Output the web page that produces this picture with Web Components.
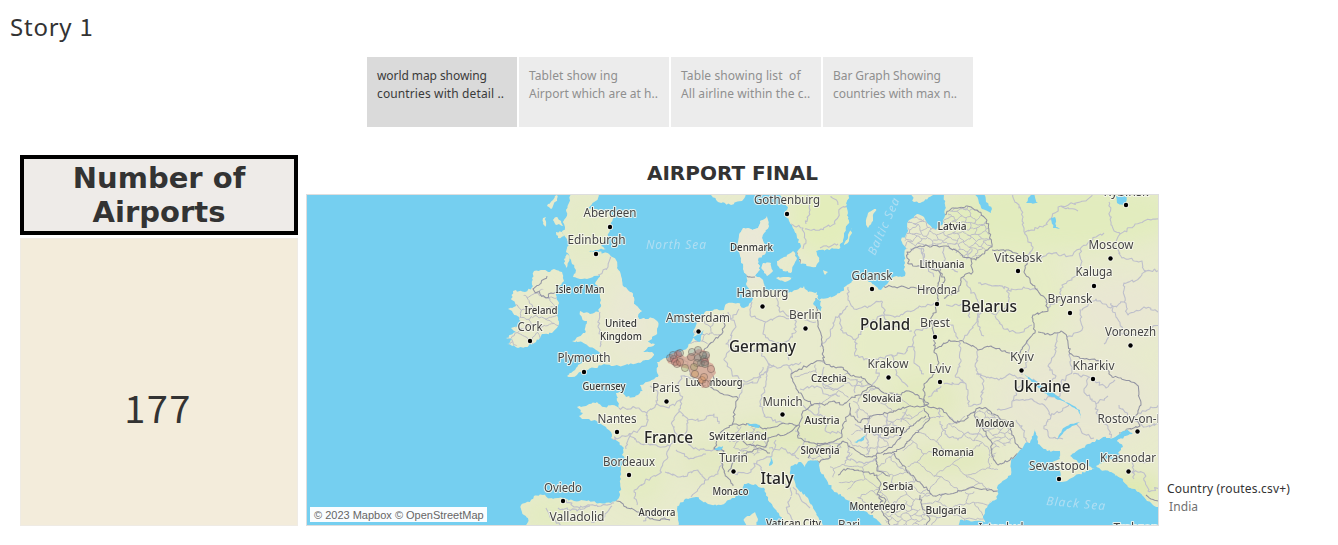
<!DOCTYPE html>
<html lang="en">
<head>
<meta charset="utf-8">
<title>Story 1</title>
<style>html,body{margin:0;background:#fff;overflow:hidden}</style>
</head>
<body>
<story-app>
  <story-title slot="title">Story <span style="font-family:'Noto Sans CJK SC',sans-serif">1</span></story-title>
  <story-point slot="points" active><span>world map showing</span><span slot="second">countries with detail ..</span></story-point>
  <story-point slot="points"><span>Tablet show ing</span><span slot="second">Airport which are at h..</span></story-point>
  <story-point slot="points"><span>Table showing list&nbsp; of</span><span slot="second">All airline within the c..</span></story-point>
  <story-point slot="points"><span>Bar Graph Showing</span><span slot="second">countries with max n..</span></story-point>
  <airport-count slot="body" value="177">Number of<br>Airports</airport-count>
  <airport-map slot="body">AIRPORT FINAL</airport-map>
  <map-legend slot="body" item="India">Country (routes.csv+)</map-legend>
</story-app>
<script>
const define = (name, html, setup) => customElements.define(name, class extends HTMLElement {
  constructor() {
    super();
    const t = document.createElement('template');
    t.innerHTML = html;
    this.attachShadow({mode: 'open'}).append(t.content.cloneNode(true));
  }
  connectedCallback() { if (setup) setup(this, this.shadowRoot); }
});

define('story-app', `<style>
:host{display:block;width:1338px;height:545px;font-family:"Noto Sans",sans-serif;color:#333}
.points{display:flex;gap:2px;margin-left:367px}
.body{display:flex;margin:28px 0 0 20px;height:371px}
</style><slot name="title"></slot><div class="points"><slot name="points"></slot></div><div class="body"><slot name="body"></slot></div>`);

define('story-title', `<style>:host{display:block;height:57px;padding-left:10px;box-sizing:border-box;font-size:24px;line-height:51px;white-space:nowrap}div{width:max-content}</style><div><slot></slot></div>`, (el, root) => {
  const d = root.querySelector('div');
  d.style.letterSpacing = ((83.5 - d.getBoundingClientRect().width) / 7) + 'px';
});

define('story-point', `<style>
:host{display:block;box-sizing:border-box;width:150px;height:70px;padding:10px 0 0 10px;background:#ececec;color:#8f8f8f;font-size:12px;line-height:18px;white-space:nowrap}
:host([active]){background:#dadada;color:#3a3a3a}
div{height:18px;width:max-content}
</style><div><slot></slot></div><div><slot name="second"></slot></div>`, (el, root) => {
  const widths = [[110,127],[89,129],[119,129],[108,124]];
  const i = [...el.parentNode.querySelectorAll('story-point')].indexOf(el);
  [...root.querySelectorAll('div')].forEach((d, j) => {
    const n = j ? 23 : 16;
    d.style.letterSpacing = ((widths[i][j] - d.getBoundingClientRect().width) / n) + 'px';
  });
});

define('airport-count', `<style>
:host{display:flex;flex-direction:column;gap:3px;width:278px;height:371px}
h2{box-sizing:border-box;margin:0;height:80px;border:4px solid #000;background:#eeebe8;text-align:center;font:700 29px/34px "DejaVu Sans",sans-serif;padding-top:2px}
.n{flex:1;box-sizing:border-box;border:1px solid #efebe4;background:#f3ecdb;text-align:center;font:400 38px/53px "Noto Sans CJK SC",sans-serif;padding:141px 2px 0 0;letter-spacing:1.4px}
</style><h2><slot></slot></h2><div class="n"></div>`, (el, root) => root.querySelector('.n').textContent = el.getAttribute('value'));

define('map-legend', `<style>
:host{display:block;padding:325px 0 0 8px;font-size:12px;line-height:18px;white-space:nowrap}
.t{width:max-content;font-weight:450}.i{padding-left:2px;color:#707070;letter-spacing:.1px}
</style><div class="t"><slot></slot></div><div class="i"></div>`, (el, root) => {
  root.querySelector('.i').textContent = el.getAttribute('item');
  const t = root.querySelector('.t');
  t.style.letterSpacing = ((123 - t.getBoundingClientRect().width) / 21) + 'px';
});

/* Map geometry, in the coordinate space of the 852 x 330 viewport that starts at (307,195). */
const LAND = {
  britain: '571,194 569,203 566,210 567,216 563,222 565,227 562,233 567,239 569,245 566,252 570,256 572,264 576,270 573,277 580,279 587,279 594,276 600,275 595,284 601,287 598,292 601,300 599,312 590,314 580,311 582,318 587,321 585,333 578,337 572,341 582,342 588,346 596,350 601,353 591,357 585,361 578,365 575,370 567,376 572,377 580,372 588,370 595,368 604,364 613,366 625,365 640,363 648,360 654,355 652,352 643,352 648,347 655,344 646,342 656,335 658,322 652,318 641,319 638,317 642,311 634,304 633,294 624,287 622,279 617,268 616,260 609,254 598,252 589,252 598,250 606,249 601,246 608,236 611,226 614,217 609,212 598,210 588,208 594,202 598,198 599,194',
  ireland: '532,278 534,271 543,270 550,272 554,269 562,272 564,281 557,288 556,295 559,303 557,315 559,324 552,333 542,334 536,342 525,347 518,348 507,344 513,339 506,338 516,332 511,328 520,325 519,317 508,309 516,306 511,299 513,291 525,292 533,286',
  lewis:'548,204 553,200 557,195 557,199 553,206 551,209 547,206', uist:'543,218 546,217 545,227 543,224', skye:'553,220 557,217 561,221 563,226 559,224 556,225', mull:'556,232 562,232 564,236 558,238', arran:'564,259 567,254 570,257 566,268',
  europe: '527,527 528,518 522,512 521,505 530,502 534,496 543,495 553,499 563,498 574,501 587,501 600,503 611,503 617,500 620,494 621,479 622,465 626,460 622,455 624,448 616,440 611,438 611,432 606,427 598,422 590,420 582,419 579,416 583,413 577,407 586,406 597,402 604,407 612,405 619,408 616,393 622,392 626,397 635,397 643,391 640,385 647,382 658,377 657,362 667,358 679,353 688,347 693,338 695,328 699,319 706,311 717,309 724,310 726,304 738,303 744,308 752,301 752,293 746,284 747,276 743,269 741,258 738,249 739,235 743,228 749,232 758,228 760,221 767,216 769,226 764,233 762,238 766,252 758,260 760,270 755,276 763,280 766,291 777,291 788,293 796,290 804,286 808,292 817,292 819,300 828,298 840,293 846,286 856,279 865,280 871,282 881,290 888,283 893,277 905,276 904,260 906,249 901,240 907,233 908,222 917,214 924,217 928,224 936,230 943,224 946,208 944,194 1161,194 1161,512 1158,507 1147,501 1139,492 1128,487 1121,478 1110,472 1101,470 1096,466 1103,462 1109,458 1122,461 1118,453 1123,447 1117,441 1133,433 1127,429 1113,438 1103,437 1092,442 1080,449 1070,456 1079,463 1091,467 1095,469 1079,474 1067,481 1060,482 1060,471 1050,463 1060,459 1060,451 1047,451 1038,444 1027,442 1020,450 1011,462 1011,475 998,485 997,499 990,503 985,510 983,518 989,527 883,527 873,515 858,509 844,497 833,490 826,479 820,470 818,461 808,461 805,467 801,462 791,466 790,472 797,488 808,498 815,511 824,526 787,527 777,512 768,500 765,489 755,484 744,484 738,495 721,505 708,504 696,497 684,500 677,509 678,527',
  sweden:'780,194 788,207 785,214 792,225 797,238 801,246 797,252 801,264 816,267 819,259 816,251 827,249 839,249 844,235 849,221 846,207 849,194', norway:'710,194 718,202 731,205 742,201 748,194',
  zealand:'777,261 784,257 793,251 797,258 793,266 791,273 783,271 779,267', lolland:'776,278 786,277 794,277 785,282', funen:'763,263 771,263 773,271 767,276 762,269', limfjord:'741,231 748,228 754,231 749,238 742,239', bornholm:'823,270 828,272 825,275', gotland:'866,223 869,212 876,209 873,218 868,228', oland:'844,245 848,235 852,228 849,241', saaremaa:'911,194 914,202 922,202 933,195', corsica:'744,519 755,512 758,519 756,527 746,527'
};
const WATER = ['975,194 984,194 986,202 992,209 991,213 982,209','1028,198 1033,194 1038,203 1026,203','1116,196 1128,196 1125,206 1117,203','1051,218 1055,217 1056,227 1060,229 1053,228','1024,374 1034,380 1045,388 1060,398 1072,405 1080,410 1081,419 1078,410 1060,400 1044,393','1080,422 1067,429 1057,440 1062,430 1070,424','854,442 866,435 864,440 857,443','715,448 723,446 721,450 715,450','747,423 760,425 759,428 749,426','816,298 821,301 821,311 813,304','691,338 698,334 704,330 700,342','1035,429 1038,441 1037,448 1030,445','771,456 773,463 769,466','960,520 990,522 993,527 957,527'];
const NATIONAL = [
 '559,291 551,293 546,298 540,294 533,289 540,284 547,276','615,500 626,507 638,512 650,519 670,520',
 '677,354 688,362 691,376 702,380 711,387 720,393 738,398 735,409 732,425 721,432 714,449 724,451 721,462 725,474 733,486',
 '725,316 723,332 713,342 704,350 707,364 714,379 711,388','755,277 748,277 743,273','795,250 800,263 796,267',
 '816,298 818,323 822,342 824,361 815,362 791,374 796,387 803,397 813,405 803,411 799,425 783,423 770,428 766,429 755,426 743,424 732,425','824,361 832,367 841,367 852,376 865,379 872,386 884,393 899,395 909,391 922,399 929,404',
 '813,405 826,404 834,401 843,405 850,399 860,395 872,386','850,403 851,416 858,422 872,416 890,412 907,407 920,407 929,404','843,441 850,447 867,457 881,453 895,444 903,433 914,424 926,416','799,425 798,438 812,443 827,444 842,437 843,424 850,413','808,458 811,448 827,444','843,441 833,452 828,459 814,463','838,475 844,469 862,471 877,475 881,484 877,494 883,501 871,513','876,455 877,471 890,476','892,452 901,463 911,475 920,482 933,496 950,494 973,487 998,491','920,495 922,507 930,519 925,527',
 '728,472 735,460 747,452 760,448 770,453','735,434 747,445 765,447 768,438 788,433 799,425',
 '883,286 940,290 945,280 938,270 925,268 909,264 907,252 920,246 944,246 957,251 963,257 976,260 985,251 992,247 989,231 986,219 977,210 966,206 952,208 944,215','971,259 973,272 961,278 959,291 944,298','941,267 938,291 936,310 931,319 935,338 934,351 949,340 963,341 978,350 991,346 1009,353 1020,353 1028,340 1035,333 1033,315 1048,311 1045,298 1035,288 1024,272 1027,260 1011,251 992,250','1038,332 1050,335 1061,331 1067,337 1070,354 1085,359 1100,361 1112,377 1121,378 1137,385 1141,405 1135,416 1140,426 1119,433','934,351 939,363 932,377 924,384 924,405 943,410 954,422 964,421 976,409 986,408 996,415 1009,424 1015,442 1022,451 1010,460 998,465 993,457 991,441 980,424 973,412','883,455 902,448 912,437 923,427 930,418 924,408','1146,495 1151,499 1160,501','879,495 886,500 881,510 890,525'
];
const REGIONS = [
 '598,275 608,267 610,257','600,312 598,326 602,337 600,347','566,500 574,507 590,505 601,506 614,503','558,508 577,511 590,506','612,506 603,518 591,522','546,508 550,517 562,526','643,521 654,511 670,520','619,408 637,408 647,413 647,423 638,431 624,436 612,439','647,413 657,404 669,408 682,399 678,387 681,376 696,380','657,404 658,393 650,386','682,399 679,411 688,420 704,420 714,414 719,424','680,411 672,422 677,436 670,446 662,447 641,444 630,434 626,449','670,446 667,459 659,474 645,481 634,492 637,505','665,472 680,477 698,470 706,480 699,488 691,497','694,449 713,450 723,451','687,420 685,437 694,449','676,450 689,459 706,454','706,480 718,474 724,462',
 '728,312 736,327 726,344 743,352 758,348 768,363 776,367 789,366 801,362','731,345 724,359 732,374 745,382 760,376 774,365','752,302 750,315 766,322 780,316 795,320 795,333 785,342 789,360','766,322 763,334 774,342 785,342','739,398 743,384 758,381 763,367','797,311 805,320 816,322','777,291 779,310 792,318','722,317 733,318 739,309','768,363 766,384 760,402 764,416 783,424','789,366 793,374',
 '848,287 848,300 854,309 869,306 881,301 885,315 897,316 918,308 934,303','848,306 839,316 843,333 856,339 868,325 882,315','820,347 829,338 835,320 843,312','856,339 855,356 873,361 890,355 903,354 913,344 915,331 931,326','882,315 889,328 901,325 912,331','873,361 879,376 872,386','893,355 896,375 908,387','913,344 914,363 924,374',
 '791,224 803,228 806,240 803,249','805,229 821,229 835,224 841,208 849,205','807,195 810,210 806,224','820,248 838,244','838,205 831,196','910,249 922,248 926,265 934,277','923,248 923,266 939,269','944,247 944,265 958,272','966,259 972,249','1011,194 1021,210 1025,233 1033,248 1025,260','1025,232 1043,227 1052,217 1061,206 1085,201 1094,194','1061,206 1078,211','1109,202 1111,225 1120,234 1113,243','1120,234 1135,224 1153,219 1160,220','1104,233 1096,237 1080,249 1069,256 1049,253 1037,260 1025,260','1080,249 1081,267 1072,280 1062,285 1060,300 1048,308','1113,243 1122,258 1142,261 1145,272 1160,270','1145,270 1137,280 1124,283 1124,302 1111,308 1096,299 1080,310 1082,330 1067,337','1124,302 1128,315 1144,307 1160,312','1104,344 1114,330 1130,335 1145,333 1160,323','963,278 970,288 979,303 978,326 984,336','978,283 1008,288 1008,305 996,315 982,308','982,309 975,324 963,340','1008,290 1025,288 1038,289','995,316 1004,329 1019,333 1032,325','946,305 966,305 970,318','935,319 953,325 958,339','959,342 961,360 955,376','978,350 976,370 984,381 980,404 968,406','955,376 966,384 969,405','976,374 999,380 1010,374 1024,379 1017,390 1012,407 997,410','1028,341 1028,360 1022,375','1058,333 1055,354 1048,366 1056,376 1044,389 1033,379','1070,354 1072,372 1061,382 1060,396 1044,399','1013,401 1032,399 1044,405 1051,416 1069,405','1051,416 1044,426 1050,438 1063,439','1073,374 1089,377 1106,388 1115,380','1089,377 1084,392 1096,404 1108,396','1096,404 1098,417 1107,425 1111,438','1076,423 1082,433 1094,438','1111,303 1117,318 1125,330','1016,420 1023,430 1027,442','1139,413 1160,405','1119,405 1130,418 1144,427 1160,424','1129,471 1144,473 1148,491 1160,487','1134,479 1133,462 1146,462','939,408 939,418','941,386 928,397','964,383 944,384','839,377 852,386 870,385','800,389 817,386 825,394 840,396','824,367 823,384 835,389 844,385','857,379 855,393','850,445 847,459 864,464 877,458','887,413 887,426 878,438 878,454','868,416 869,431 883,438 902,436','855,424 867,432 868,455','803,405 815,415 825,416 827,432 842,433','800,436 795,431','820,402 817,415','735,474 751,472 757,461 772,456 776,440','757,461 764,474 775,479 789,486 791,496','769,448 785,449 799,459','792,455 803,445 805,438','791,497 787,510 795,524','793,487 800,497 810,508','883,414 893,425 905,431','858,409 858,418','907,409 901,422','940,421 945,434 958,440 968,432 988,437'
];
const DENSE = [
 ['ireland','533,287 559,292 560,333 536,345 508,346 508,309',10,3],['latvia','908,222 918,214 936,230 946,217 952,208 966,206 977,210 986,219 992,247 976,260 963,257 944,246 920,246 903,250',5.5,2.2],
 ['moldova','973,412 986,408 1009,424 1015,442 998,448 991,465 991,441 980,424',5,1.5],['slovenia','808,458 811,448 842,438 843,446 828,459 814,463',5,1.5],['swiss','728,440 735,426 766,429 770,445 755,456 735,450',7,3],
 ['balkan','830,452 876,455 879,494 872,510 830,475',15,5],['serbia','876,455 892,452 932,495 921,510 880,510',12,4],['macedonia','880,507 905,500 927,513 925,525 887,525',5,1],['romania','902,448 928,416 975,416 990,440 998,465 997,490 970,490 933,496 910,474',17,6],['bulgaria','920,495 998,490 985,510 989,525 925,525',14,5],['hungary','844,441 872,416 924,410 900,440 868,456',18,6],['czech','792,374 824,361 869,382 840,404 812,404',18,6],['netherlands','695,325 724,313 720,338 700,348 690,344',10,3],['slovakia','852,402 873,386 923,400 890,412 857,420',15,5]
];
const AIRPORTS_AREA = '667,359 671,354 678,351 685,357 691,354 698,349 704,350 710,355 709,362 713,364 716,373 711,379 709,387 702,388 698,379 691,376 689,369 680,367 674,365 668,363';
const MARKS = [['670,358','7b8790'],['674,359','d45c65'],['678,354','d45c65'],['680,353','718896'],['675,362','bb7a76'],['677,364','b27c70'],['680,362','bd7a69'],['673,355','7c9098'],['692,352','789297'],['698,350','7b8790'],['691,357','a4847b'],['698,358','6a8991'],['704,359','687d73'],['701,363','648c91'],['706,355','789297'],['697,363','96917d'],['685,368','95a05f'],['694,367','95a05f'],['695,374','ca9a55'],['705,362','cf6671'],['711,369','d0a18f'],['705,364','618e7f'],['703,355','6e8d83'],['702,380','dc843f'],['706,384','d0a18f'],['704,377','cf9a70']];
/* name, centre x, baseline y, width, kind: c city, s small country, b big country */
const LABELS = [
 ['Aberdeen',610,217,53,'c'],['Edinburgh',596.5,244,58,'c'],['Isle of Man',580,293,49,'s'],['Ireland',541,314,33,'s'],['Cork',530,331,25,'c'],['United',621,327,32,'s'],['Kingdom',621,340,42,'s'],['Plymouth',584,362,53,'c'],['Guernsey',604,390,43,'s'],['Paris',666,392,28,'c'],['Nantes',617,423,39,'c'],['France',668.5,443,49,'b'],['Bordeaux',629,466,52,'c'],['Oviedo',563,492,38,'c'],['Valladolid',577,521,55,'c'],['Andorra',657,516,37,'s'],
 ['Gothenburg',787,204,66,'c'],['Denmark',751.5,251,43,'s'],['Hamburg',762.5,297,52,'c'],['Gdansk',872,280,41,'c'],['Amsterdam',698,322,64,'c'],['Berlin',805.5,319,33,'c'],['Germany',762.5,352,67,'b'],['Poland',885,330,50,'b'],['Luxembourg',714,386,57,'s'],['Munich',782.5,406,40,'c'],['Czechia',829,382,36,'s'],['Krakow',888,368,41,'c'],['Slovakia',882,402,39,'s'],['Austria',822,424,35,'s'],['Hungary',884,433,41,'s'],['Switzerland',738,440,58,'s'],['Slovenia',820,454,39,'s'],['Turin',733.5,462,29,'c'],['Italy',777,484,33,'b'],['Monaco',730.5,495,36,'s'],['Serbia',898,490,31,'s'],['Montenegro',877.5,510,56,'s'],['Vatican City',793.5,527,55,'s'],['Bari',849,529,22,'c'],
 ['Latvia',952,230,29,'s'],['Lithuania',942,268,45,'s'],['Hrodna',937,294,40,'c'],['Brest',935,327,30,'c'],['Belarus',989,312,56,'b'],['Vitsebsk',1018,262,48,'c'],['Moscow',1111,249,45,'c'],['Kaluga',1094,276,37,'c'],['Bryansk',1070,303,45,'c'],['Voronezh',1130.5,336,51,'c'],['Rybinsk',1126,196,45,'c'],['Kyiv',1022,361,24,'c'],['Lviv',940,373,22,'c'],['Ukraine',1042,392,57,'b'],['Kharkiv',1093.5,370,42,'c'],['Rostov-on-Don',1138.5,423,82,'c'],['Moldova',995,427,39,'s'],['Romania',953,456,42,'s'],['Sevastopol',1059,470,60,'c'],['Krasnodar',1128,462,56,'c'],['Bulgaria',946,514,41,'s'],['Istanbul',1001,532,45,'c'],['Trabzon',1136,532,45,'c']
];
const DOTS = [[610,227],[596,254],[530,341],[584,372],[666.5,401.5],[617,432],[629,475],[563,501],[787,214],[762.5,306.5],[872,289],[698.5,331.5],[805.5,328.5],[782.5,414.5],[888.5,377.5],[733.5,471.5],[937,304],[935,337],[1018,271],[1110.5,258.5],[1094,286],[1070,313],[1130.5,345.5],[1126,205],[1021.5,370.5],[940,382],[1093,379],[1137.5,431.5],[1059,479],[1128.5,471.5]];

let seed = 7;
const rnd = () => (seed = (seed * 16807) % 2147483647) / 2147483647 - .5;
const pts = s => s.split(' ').map(p => p.split(',').map(Number));
function rough(list, amount, closed) {
  const p = closed ? [...list, list[0]] : list, out = [p[0]];
  for (let i = 1; i < p.length; i++) {
    const [ax, ay] = p[i-1], [bx, by] = p[i], d = Math.hypot(bx-ax, by-ay), n = Math.max(1, Math.round(d / 2.2));
    for (let k = 1; k < n; k++) out.push([ax+(bx-ax)*k/n + rnd()*amount, ay+(by-ay)*k/n + rnd()*amount]);
    out.push(p[i]);
  }
  return 'M' + out.map(q => q.map(v => v.toFixed(1)).join(' ')).join('L') + (closed ? 'Z' : '');
}
function mesh([id, area, cell, jitter]) {
  const p = pts(area), xs = p.map(q => q[0]), ys = p.map(q => q[1]);
  const x0 = Math.min(...xs) - cell, y0 = Math.min(...ys) - cell, cols = Math.ceil((Math.max(...xs)-x0)/cell)+2, rows = Math.ceil((Math.max(...ys)-y0)/cell)+2;
  const g = Array.from({length: rows}, (_, r) => Array.from({length: cols}, (_, c) => [x0+c*cell+(r%2?cell/2:0)+rnd()*jitter*2, y0+r*cell+((c+r)%2?cell/4:-cell/4)+rnd()*jitter*2]));
  let d = '';
  for (let r = 0; r < rows; r++) for (let c = 0; c < cols; c++) {
    if (c+1 < cols) d += rough([g[r][c], g[r][c+1]], 2.2);
    if (r+1 < rows && (c+r) % 2) d += rough([g[r][c], g[r+1][c]], 2.2);
  }
  return `<clipPath id="${id}"><polygon points="${area}"/></clipPath><path clip-path="url(#${id})" d="${d}" stroke="#bcbcc6" stroke-width="1"/>`;
}
function drawMap() {
  const land = Object.values(LAND).map(s => rough(pts(s), 2.2, true)).join('');
  const tone = (x, y, rx, ry, c, o) => `<ellipse cx="${x}" cy="${y}" rx="${rx}" ry="${ry}" fill="${c}" opacity="${o}"/>`;
  const style = {c: 'font-size="12.2" fill="#454545"', s: 'font-size="10.4" font-weight="500" fill="#383838"', b: 'font-size="15.6" font-weight="500" fill="#252525"'};
  return `<svg width="852" height="330" viewBox="307 195 852 330" xmlns="http://www.w3.org/2000/svg">
  <defs><clipPath id="land"><path d="${land}"/></clipPath><filter id="soft" x="-50%" y="-50%" width="200%" height="200%"><feGaussianBlur stdDeviation="10"/></filter></defs>
  <rect x="307" y="195" width="852" height="330" fill="#75cff0"/>
  <path d="${land}" fill="#e8ebcd"/>
  <g clip-path="url(#land)"><g filter="url(#soft)">
  ${tone(1060,215,120,35,'#e2ecbd',.95)}${tone(1000,290,65,55,'#e4ecc2',.75)}${tone(825,215,35,40,'#e2edb9',.9)}${tone(585,230,28,35,'#e3ebc5',.8)}${tone(630,320,22,40,'#e9e8d4',.9)}${tone(753,250,20,40,'#eae8d8',.9)}${tone(790,435,65,18,'#e1e9be',.9)}${tone(715,460,35,22,'#e2e9c0',.8)}${tone(950,460,45,12,'#dfe8b6',.8)}${tone(865,480,30,18,'#e2eabf',.8)}${tone(900,345,60,45,'#e6ecc4',.7)}${tone(1080,400,80,48,'#e8e7d2',.95)}${tone(1120,310,45,35,'#e9e7d3',.9)}${tone(925,400,35,22,'#e1eabb',.8)}${tone(1130,488,35,12,'#dce9a8',.9)}${tone(640,475,26,30,'#e2ebbf',.8)}${tone(670,415,35,25,'#e7ebc9',.8)}${tone(550,515,30,18,'#e2ebc0',.9)}${tone(875,430,32,18,'#e9e8d0',.9)}${tone(660,380,30,14,'#e9e8d4',.8)}${tone(775,485,20,20,'#e7eac6',.8)}
  </g><g fill="none" stroke-linejoin="round">${DENSE.map(mesh).join('')}
  <path d="${REGIONS.map(s => rough(pts(s), 3)).join('')}" stroke="#bebfcb" stroke-width="1.1"/>
  <path d="${NATIONAL.map(s => rough(pts(s), 2.5)).join('')}" stroke="#9293a2" stroke-width="1.05"/></g></g>
  <path d="${WATER.map(s => rough(pts(s), 1.6, true)).join('')}" fill="#75cff0"/>
  <g font-family="'Noto Sans',sans-serif" font-style="italic" fill="#b0def2" font-size="12"><text x="646" y="249" textLength="60">North Sea</text><text transform="translate(875 256) rotate(-66)" textLength="61">Baltic Sea</text><text transform="translate(1046 505) rotate(5)" textLength="59">Black Sea</text></g>
  <g font-family="'Noto Sans',sans-serif" text-anchor="middle" stroke="#f8f8ee" stroke-opacity=".85" stroke-width="2.2" paint-order="stroke" stroke-linejoin="round">${LABELS.map(([t,x,y,w,k]) => `<text x="${x}" y="${y}" textLength="${w}" lengthAdjust="spacingAndGlyphs" ${style[k]}>${t}</text>`).join('')}</g>
  ${DOTS.map(([x,y]) => `<circle cx="${x}" cy="${y}" r="2.2" fill="#000" stroke="#f7f7f1" stroke-width="1.6" paint-order="stroke"/>`).join('')}
  <polygon points="${AIRPORTS_AREA}" fill="#d2a797" fill-opacity=".85"/>
  <g stroke="#65534d" stroke-opacity=".55" stroke-width=".8" fill-opacity=".34">${MARKS.map(([p,c]) => { const [x,y] = p.split(','); return `<circle cx="${x}" cy="${y}" r="3.6" fill="#${c}"/>`; }).join('')}</g>
  </svg>`;
}
define('airport-map', `<style>
:host{display:block;width:853px;margin-left:8px}
h2{margin:0;height:39px;text-align:center;font:700 20px/37px "DejaVu Sans",sans-serif}
.frame{display:grid;box-sizing:border-box;width:853px;height:332px;border:1px solid #dedede;overflow:hidden}
svg,.credit{grid-area:1/1}svg{display:block;width:852px;height:330px}
.credit{align-self:end;justify-self:start;margin:0 0 3px 3px;width:177px;height:15px;box-sizing:border-box;padding-left:4px;background:rgba(255,255,255,.96);color:#666;font:11px/17px "Liberation Sans",sans-serif;white-space:nowrap;z-index:1}
</style><h2><slot></slot></h2><div class="frame">${drawMap()}<div class="credit">© 2023 Mapbox © OpenStreetMap</div></div>`);
</script>
</body>
</html>
